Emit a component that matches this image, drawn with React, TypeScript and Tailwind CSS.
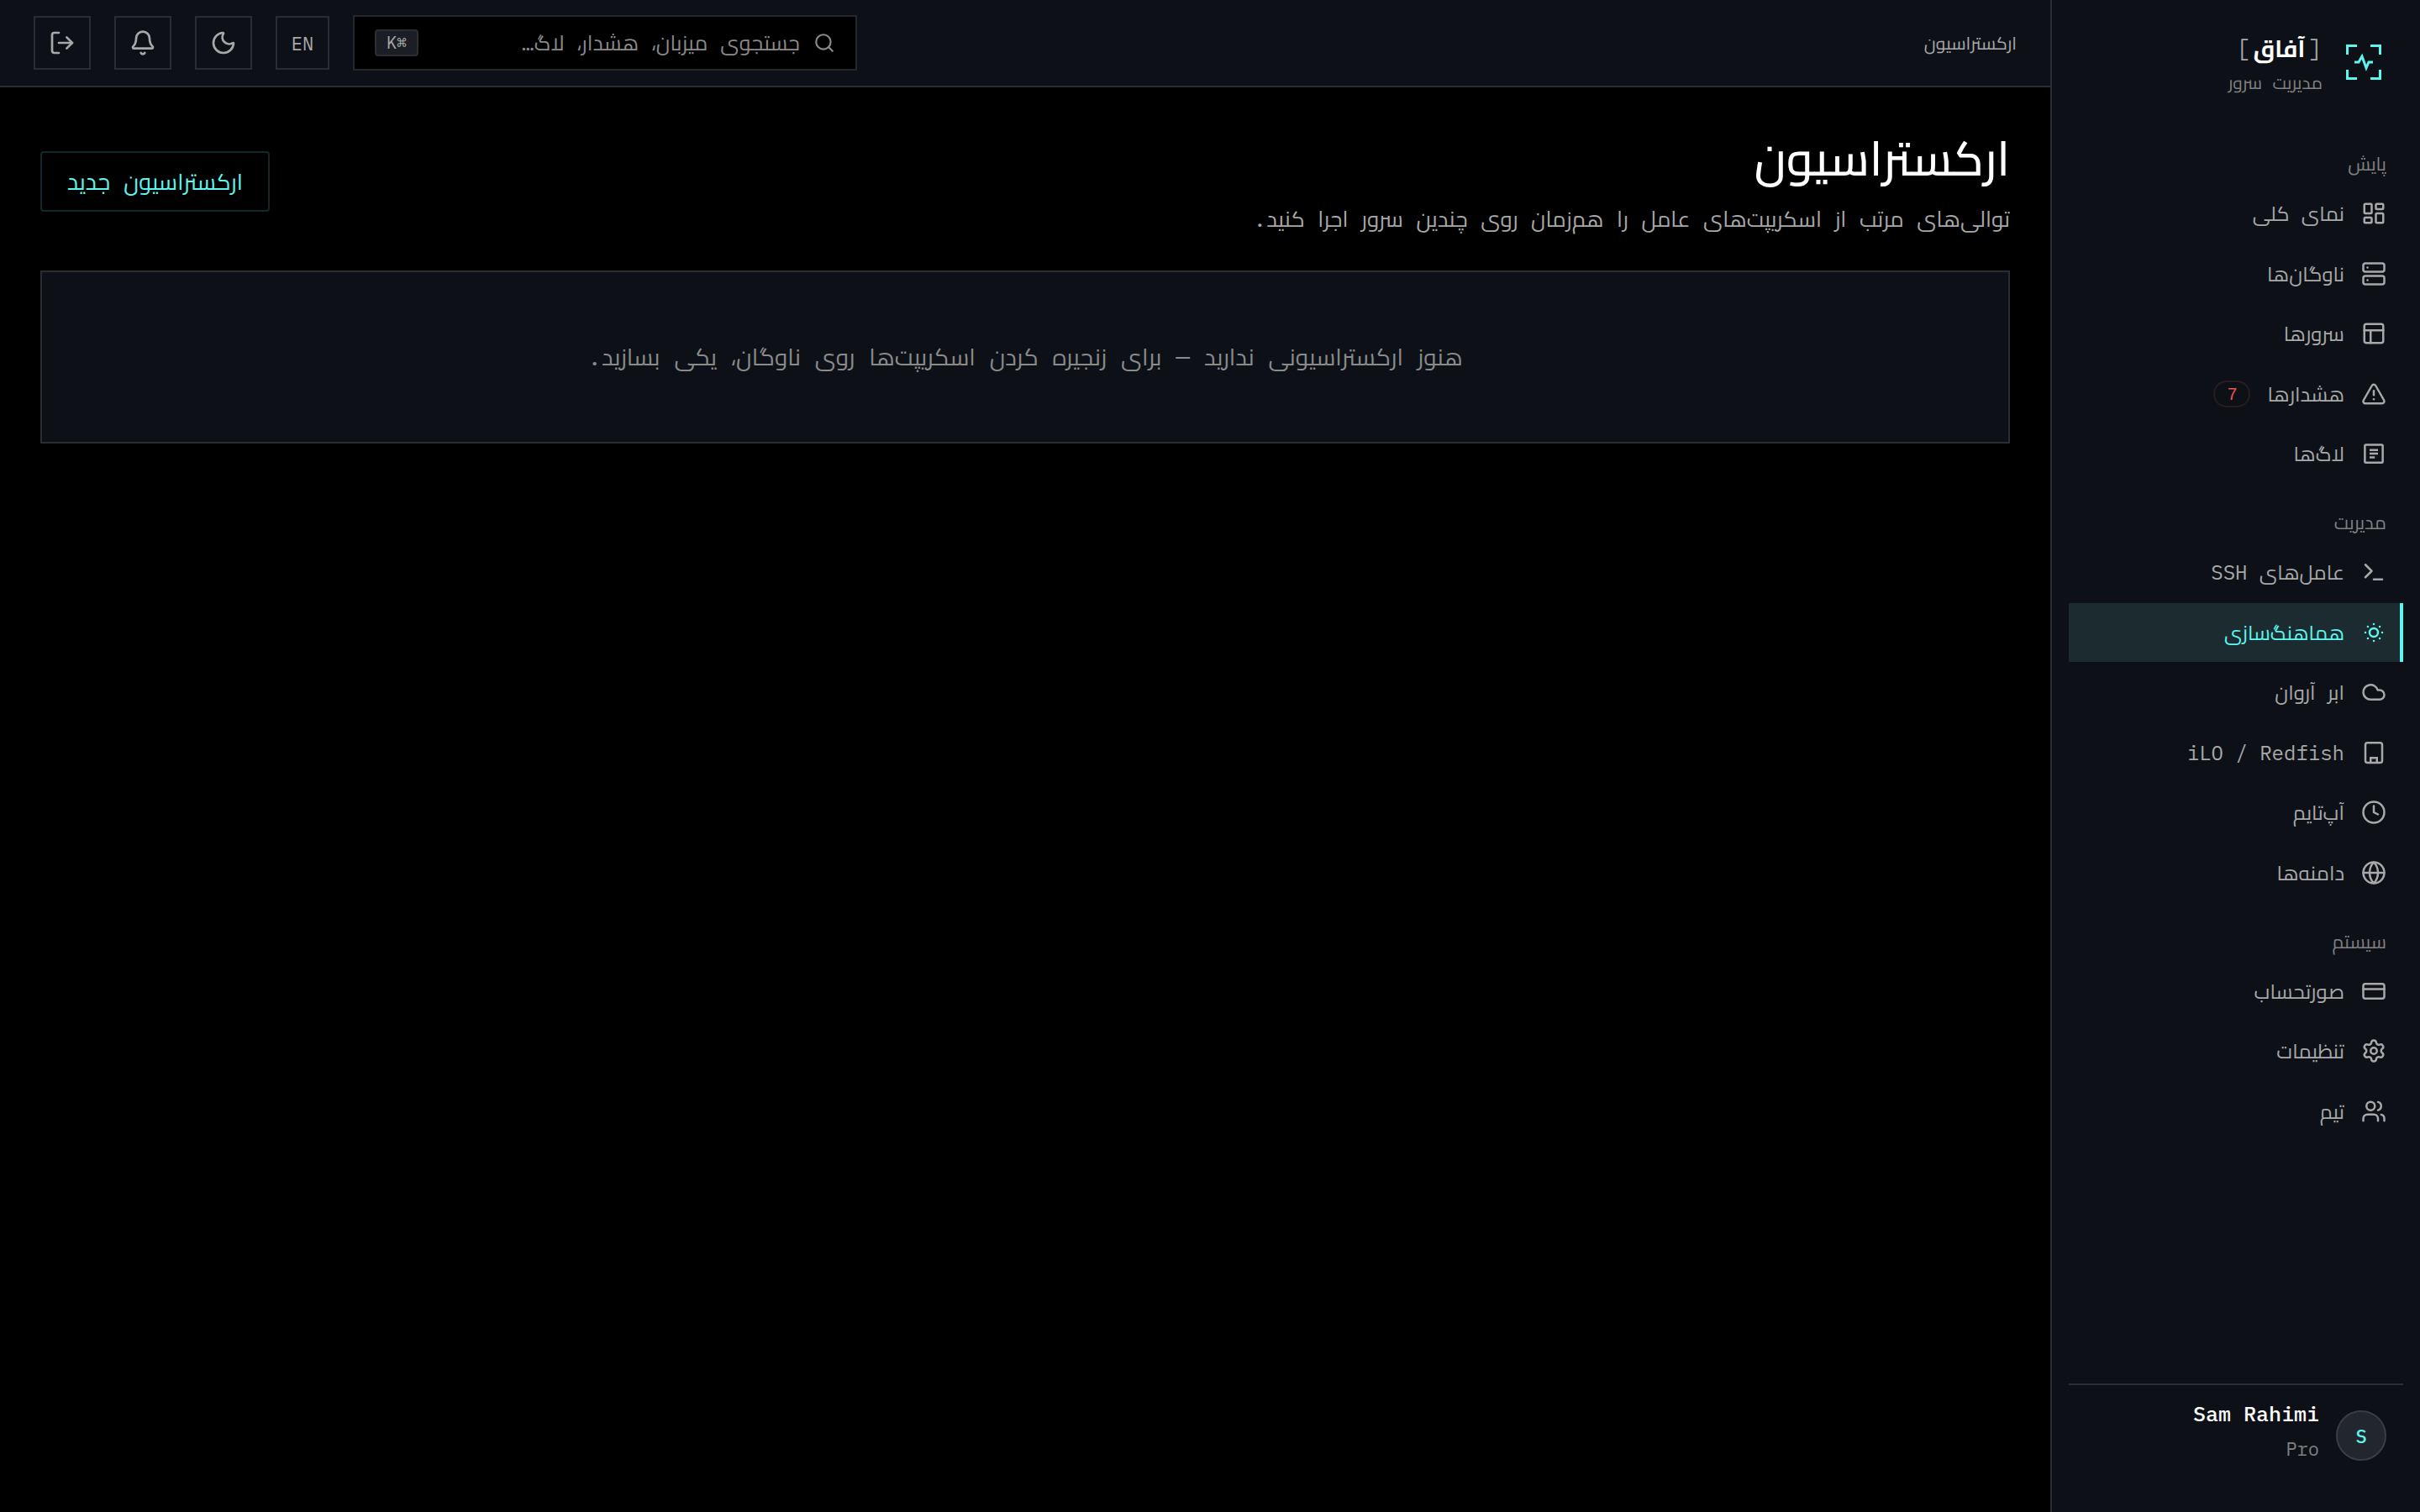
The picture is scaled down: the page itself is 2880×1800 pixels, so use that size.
import {
  Bell,
  Clock,
  Cloud,
  CreditCard,
  Globe,
  LayoutDashboard,
  LogOut,
  Moon,
  PanelsTopLeft,
  Search,
  Server,
  Settings,
  SunDim,
  Terminal,
  TriangleAlert,
  Users,
} from "lucide-react";
import type { ReactNode } from "react";

const iconClass = "size-[30px] shrink-0";

const LogsIcon = () => (
  <svg viewBox="0 0 24 24" className={iconClass} fill="none" stroke="currentColor" strokeWidth="2">
    <rect x="3.5" y="3.5" width="17" height="17" rx="1" />
    <path d="M8 8.5h8M8 12h8M8 15.5h5" />
  </svg>
);

const IloIcon = () => (
  <svg viewBox="0 0 24 24" className={iconClass} fill="none" stroke="currentColor" strokeWidth="2">
    <rect x="4" y="2.5" width="16" height="19" rx="2" />
    <path d="M9 21v-4h6v4" />
  </svg>
);

const LogoIcon = () => (
  <svg viewBox="0 0 42 42" className="size-[42px]" fill="none" stroke="#5ef5ee" strokeWidth="3">
    <path d="M1.5 12V1.5H13M29 1.5h11.500V12M1.500 30v10.500H13M40.500 30v10.500H29" />
    <path d="M10 21h5l4-7 5 14 3-7h5" />
  </svg>
);

type Item = { label: string; icon: ReactNode; active?: boolean; badge?: string };

const sections: { title: string; mt: string; items: Item[] }[] = [
  {
    title: "پایش",
    mt: "mt-[65px]",
    items: [
      { label: "نمای کلی", icon: <LayoutDashboard className={iconClass} /> },
      { label: "ناوگان‌ها", icon: <Server className={iconClass} /> },
      { label: "سرورها", icon: <PanelsTopLeft className={iconClass} /> },
      { label: "هشدارها", icon: <TriangleAlert className={iconClass} />, badge: "7" },
      { label: "لاگ‌ها", icon: <LogsIcon /> },
    ],
  },
  {
    title: "مدیریت",
    mt: "mt-[31px]",
    items: [
      { label: "عامل‌های SSH", icon: <Terminal className={iconClass} /> },
      { label: "هماهنگ‌سازی", icon: <SunDim className={iconClass} />, active: true },
      { label: "ابر آروان", icon: <Cloud className={iconClass} /> },
      { label: "iLO / Redfish", icon: <IloIcon /> },
      { label: "آپ‌تایم", icon: <Clock className={iconClass} /> },
      { label: "دامنه‌ها", icon: <Globe className={iconClass} /> },
    ],
  },
  {
    title: "سیستم",
    mt: "mt-[31px]",
    items: [
      { label: "صورتحساب", icon: <CreditCard className={iconClass} /> },
      { label: "تنظیمات", icon: <Settings className={iconClass} /> },
      { label: "تیم", icon: <Users className={iconClass} /> },
    ],
  },
];

const NavRow = ({ item }: { item: Item }) => (
  <div
    className={`flex h-[70px] items-center gap-5 text-[24px] ${
      item.active ? "border-r-4 border-[#5ef5ee] bg-[#1b2b30] pr-4 text-[#5ef5ee]" : "pr-5 text-[#a8a8a8]"
    }`}
  >
    {item.icon}
    <span>{item.label}</span>
    {item.badge && (
      <span className="flex h-8 w-11 items-center justify-center rounded-full border-2 border-[#2a1c1f] font-['Liberation_Sans',sans-serif] text-[20px] text-[#f05252]">
        {item.badge}
      </span>
    )}
  </div>
);

const HeaderButton = ({ children, w = "w-[68px]" }: { children: ReactNode; w?: string }) => (
  <button className={`flex h-16 ${w} items-center justify-center border-2 border-[#2a2d32] text-[#a8a8a8]`}>
    {children}
  </button>
);

export default function App() {
  return (
    <div
      dir="rtl"
      className="flex h-[1800px] w-[2880px] overflow-hidden bg-black font-['IBM_Plex_Mono','Cairo',monospace]"
    >
      <aside className="flex w-[440px] flex-col border-l-2 border-[#2a2d32] bg-[#0d1117] px-5">
        <div className="flex items-center gap-7 pr-[26px] pt-[34px]">
          <LogoIcon />
          <div>
            <div className="flex items-center gap-1 text-[28px] font-bold leading-[48px] text-white">
              <span className="font-normal text-[#a8a8a8]">[</span>
              <span>آفاق</span>
              <span className="font-normal text-[#a8a8a8]">]</span>
            </div>
            <div className="text-[21px] leading-8 text-[#808080]">مدیریت سرور</div>
          </div>
        </div>
        <nav className="flex-1">
          {sections.map((section) => (
            <div key={section.title} className={section.mt}>
              <div className="mb-2 pr-5 text-[22px] leading-8 text-[#808080]">{section.title}</div>
              <div className="flex flex-col gap-[1.500px]">
                {section.items.map((item) => (
                  <NavRow key={item.label} item={item} />
                ))}
              </div>
            </div>
          ))}
        </nav>
        <div className="flex h-[153px] gap-5 border-t-2 border-[#2a2d32] pr-5 pt-[30px]">
          <div className="flex size-[60px] items-center justify-center rounded-full border-2 border-[#3a3d42] bg-[#22262d] text-[22px] font-medium text-[#5ef5ee]">
            S
          </div>
          <div dir="ltr" className="-mt-4 text-right">
            <div className="text-[25px] font-medium leading-10 text-white">Sam Rahimi</div>
            <div className="text-[22px] leading-[44px] text-[#808080]">Pro</div>
          </div>
        </div>
      </aside>

      <div className="flex flex-1 flex-col">
        <header className="flex h-[104px] items-center justify-between border-b-2 border-[#2a2d32] bg-[#0d1117] px-10">
          <div className="text-[21px] leading-8 text-[#a8a8a8]">ارکستراسیون</div>
          <div className="flex items-center gap-7">
            <div className="flex h-[66px] w-[600px] items-center gap-4 border-2 border-[#24272c] bg-black px-6 text-[25px] text-[#8a8a8a]">
              <Search className="size-[26px] shrink-0" />
              <span className="flex-1">جستجوی میزبان، هشدار، لاگ…</span>
              <span
                dir="ltr"
                className="rounded border-2 border-[#2a2d32] bg-[#1b1f25] px-3 text-[20px] leading-7 text-[#a8a8a8]"
              >
                K⌘
              </span>
            </div>
            <HeaderButton w="w-16">
              <span className="text-[22px]">EN</span>
            </HeaderButton>
            <HeaderButton>
              <Moon className="size-8" />
            </HeaderButton>
            <HeaderButton>
              <Bell className="size-8" />
            </HeaderButton>
            <HeaderButton>
              <LogOut className="size-8" />
            </HeaderButton>
          </div>
        </header>

        <main className="flex flex-col gap-[42px] px-12 pt-11">
          <div className="flex items-start justify-between">
            <div>
              <h1 className="text-[57px] font-medium leading-[80px] text-white">ارکستراسیون</h1>
              <p className="mt-3 text-[26px] leading-10 text-[#a8a8a8]">
                توالی‌های مرتب از اسکریپت‌های عامل را هم‌زمان روی چندین سرور اجرا کنید.
              </p>
            </div>
            <button className="mt-8 flex h-[72px] w-[273px] items-center justify-center rounded border-2 border-[#14282b] text-[27px] leading-8 text-[#5ef5ee]">
              ارکستراسیون جدید
            </button>
          </div>
          <div className="flex h-[206px] items-center justify-center border-2 border-[#2a2d32] bg-[#0d1117] text-[28px] text-[#8a8a8a]">
            هنوز ارکستراسیونی ندارید — برای زنجیره کردن اسکریپت‌ها روی ناوگان، یکی بسازید.
          </div>
        </main>
      </div>
    </div>
  );
}
